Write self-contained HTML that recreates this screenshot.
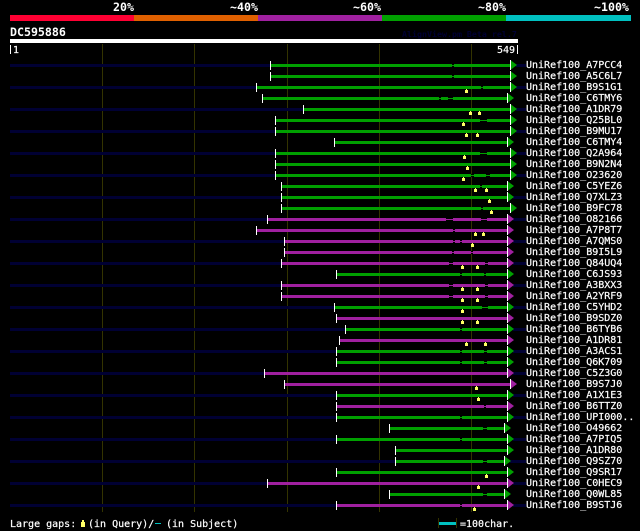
<!DOCTYPE html>
<html><head><meta charset="utf-8"><style>
html,body{margin:0;padding:0;background:#000;width:640px;height:531px;overflow:hidden}
svg{display:block}
text{font-family:"DejaVu Sans Mono","Liberation Mono",monospace;font-size:10px;fill:#fff;stroke:#fff;stroke-width:.2px;white-space:pre}
.h text{font-size:11.6px;font-weight:bold;stroke:none}
.n{fill:#000033}.g{fill:#00a000}.m{fill:#a020a0}
.k{stroke:#000;stroke-width:1;fill:none}
</style></head><body>
<svg width="640" height="531" viewBox="0 0 640 531" xmlns="http://www.w3.org/2000/svg">
<defs>
<rect id="s" x="0" y="-3" width="1" height="9" fill="#fff"/>
<g id="eg"><rect x="0" y="-4" width="1" height="10" fill="#fff"/><polygon points="1,-3.5 7,1 1,5.5" fill="#00a000"/></g>
<g id="em"><rect x="0" y="-4" width="1" height="10" fill="#fff"/><polygon points="1,-3.5 7,1 1,5.5" fill="#a020a0"/></g>
<g id="y" fill="#ffff66"><rect x="0" y="3" width="1" height="1"/><rect x="-1" y="4" width="3" height="3"/></g>
</defs>

<rect x="10" y="15" width="124" height="6" fill="#ff0033"/>
<rect x="134" y="15" width="124" height="6" fill="#e06000"/>
<rect x="258" y="15" width="124" height="6" fill="#a020a0"/>
<rect x="382" y="15" width="124" height="6" fill="#00a000"/>
<rect x="506" y="15" width="125" height="6" fill="#00c0c0"/>
<g class="h">
<text x="113" y="11">20%</text>
<text x="230" y="11">~40%</text>
<text x="353" y="11">~60%</text>
<text x="478" y="11">~80%</text>
<text x="594" y="11">~100%</text>
<text x="10" y="36">DC595886</text>
</g>
<text x="402" y="37" style="fill:#000033;stroke:none;font-weight:bold;font-size:8.3px">AlignView.pm Beta rel.7</text>
<rect x="10" y="39" width="508" height="4" fill="#fff"/>
<rect x="10" y="45" width="1" height="9" fill="#fff"/>
<text x="13" y="53">1</text>
<text x="497" y="53">549</text>
<rect x="517" y="45" width="1" height="9" fill="#fff"/>

<g fill="#333300">
<rect x="102" y="44" width="1" height="468"/>
<rect x="194" y="44" width="1" height="468"/>
<rect x="287" y="44" width="1" height="468"/>
<rect x="379" y="44" width="1" height="468"/>
<rect x="471" y="44" width="1" height="468"/>
</g>

<g transform="translate(0,64)"><path class="n" d="M10 0H270v3H10zM516 0H526v3H516z"/><use href="#s" x="270"/><path class="g" d="M271 0H510v3H271z"/><path class="k" d="M452 .5h2M452 2.5h2"/><use href="#eg" x="510"/></g>
<g transform="translate(0,75)"><use href="#s" x="270"/><path class="g" d="M271 0H510v3H271z"/><path class="k" d="M452 .5h2M452 2.5h2"/><use href="#eg" x="510"/></g>
<g transform="translate(0,86)"><path class="n" d="M10 0H256v3H10zM516 0H526v3H516z"/><use href="#s" x="256"/><path class="g" d="M257 0H510v3H257z"/><path class="k" d="M481 .5h2M481 2.5h2"/><use href="#eg" x="510"/><use href="#y" x="466"/></g>
<g transform="translate(0,97)"><use href="#s" x="262"/><path class="g" d="M263 0H507v3H263z"/><path class="k" d="M439 .5h2M439 2.5h2M448 .5h5M448 2.5h5"/><use href="#eg" x="507"/></g>
<g transform="translate(0,108)"><path class="n" d="M10 0H303v3H10zM516 0H526v3H516z"/><use href="#s" x="303"/><path class="g" d="M304 0H510v3H304z"/><use href="#eg" x="510"/><use href="#y" x="470"/><use href="#y" x="479"/></g>
<g transform="translate(0,119)"><use href="#s" x="275"/><path class="g" d="M276 0H510v3H276z"/><path class="k" d="M480 .5h7M480 2.5h7"/><use href="#eg" x="510"/><use href="#y" x="463"/></g>
<g transform="translate(0,130)"><path class="n" d="M10 0H275v3H10zM516 0H526v3H516z"/><use href="#s" x="275"/><path class="g" d="M276 0H510v3H276z"/><use href="#eg" x="510"/><use href="#y" x="466"/><use href="#y" x="477"/></g>
<g transform="translate(0,141)"><use href="#s" x="334"/><path class="g" d="M335 0H507v3H335z"/><use href="#eg" x="507"/></g>
<g transform="translate(0,152)"><path class="n" d="M10 0H275v3H10zM516 0H526v3H516z"/><use href="#s" x="275"/><path class="g" d="M276 0H510v3H276z"/><path class="k" d="M480 .5h7M480 2.5h7"/><use href="#eg" x="510"/><use href="#y" x="464"/></g>
<g transform="translate(0,163)"><use href="#s" x="275"/><path class="g" d="M276 0H510v3H276z"/><use href="#eg" x="510"/><use href="#y" x="467"/></g>
<g transform="translate(0,174)"><path class="n" d="M10 0H275v3H10zM516 0H526v3H516z"/><use href="#s" x="275"/><path class="g" d="M276 0H510v3H276z"/><path class="k" d="M471 .5h3M471 2.5h3M486 .5h4M486 2.5h4"/><use href="#eg" x="510"/><use href="#y" x="463"/></g>
<g transform="translate(0,185)"><use href="#s" x="281"/><path class="g" d="M282 0H507v3H282z"/><path class="k" d="M480 .5h2M480 2.5h2"/><use href="#eg" x="507"/><use href="#y" x="475"/><use href="#y" x="486"/></g>
<g transform="translate(0,196)"><path class="n" d="M10 0H281v3H10zM513 0H526v3H513z"/><use href="#s" x="281"/><path class="g" d="M282 0H507v3H282z"/><use href="#eg" x="507"/><use href="#y" x="489"/></g>
<g transform="translate(0,207)"><use href="#s" x="281"/><path class="g" d="M282 0H510v3H282z"/><path class="k" d="M481 .5h2M481 2.5h2"/><use href="#eg" x="510"/><use href="#y" x="491"/></g>
<g transform="translate(0,218)"><path class="n" d="M10 0H267v3H10zM513 0H526v3H513z"/><use href="#s" x="267"/><path class="m" d="M268 0H507v3H268z"/><path class="k" d="M446 .5h7M446 2.5h7M481 .5h6M481 2.5h6"/><use href="#em" x="507"/></g>
<g transform="translate(0,229)"><use href="#s" x="256"/><path class="m" d="M257 0H507v3H257z"/><path class="k" d="M453 .5h2M453 2.5h2"/><use href="#em" x="507"/><use href="#y" x="475"/><use href="#y" x="483"/></g>
<g transform="translate(0,240)"><path class="n" d="M10 0H284v3H10zM513 0H526v3H513z"/><use href="#s" x="284"/><path class="m" d="M285 0H507v3H285z"/><path class="k" d="M453 .5h2M453 2.5h2M460 .5h2M460 2.5h2"/><use href="#em" x="507"/><use href="#y" x="472"/></g>
<g transform="translate(0,251)"><use href="#s" x="284"/><path class="m" d="M285 0H507v3H285z"/><path class="k" d="M452 .5h2M452 2.5h2M471 .5h2M471 2.5h2"/><use href="#em" x="507"/></g>
<g transform="translate(0,262)"><path class="n" d="M10 0H281v3H10zM513 0H526v3H513z"/><use href="#s" x="281"/><path class="m" d="M282 0H507v3H282z"/><path class="k" d="M449 .5h4M449 2.5h4M485 .5h3M485 2.5h3"/><use href="#em" x="507"/><use href="#y" x="462"/><use href="#y" x="477"/></g>
<g transform="translate(0,273)"><use href="#s" x="336"/><path class="g" d="M337 0H507v3H337z"/><path class="k" d="M460 .5h2M460 2.5h2M484 .5h2M484 2.5h2"/><use href="#eg" x="507"/></g>
<g transform="translate(0,284)"><path class="n" d="M10 0H281v3H10zM513 0H526v3H513z"/><use href="#s" x="281"/><path class="m" d="M282 0H507v3H282z"/><path class="k" d="M449 .5h4M449 2.5h4M485 .5h3M485 2.5h3"/><use href="#em" x="507"/><use href="#y" x="462"/><use href="#y" x="477"/></g>
<g transform="translate(0,295)"><use href="#s" x="281"/><path class="m" d="M282 0H507v3H282z"/><path class="k" d="M449 .5h4M449 2.5h4M485 .5h3M485 2.5h3"/><use href="#em" x="507"/><use href="#y" x="462"/><use href="#y" x="477"/></g>
<g transform="translate(0,306)"><path class="n" d="M10 0H334v3H10zM513 0H526v3H513z"/><use href="#s" x="334"/><path class="g" d="M335 0H507v3H335z"/><path class="k" d="M482 .5h6M482 2.5h6"/><use href="#eg" x="507"/><use href="#y" x="462"/></g>
<g transform="translate(0,317)"><use href="#s" x="336"/><path class="m" d="M337 0H507v3H337z"/><use href="#em" x="507"/><use href="#y" x="462"/><use href="#y" x="477"/></g>
<g transform="translate(0,328)"><path class="n" d="M10 0H345v3H10zM513 0H526v3H513z"/><use href="#s" x="345"/><path class="g" d="M346 0H507v3H346z"/><path class="k" d="M460 .5h2M460 2.5h2"/><use href="#eg" x="507"/></g>
<g transform="translate(0,339)"><use href="#s" x="339"/><path class="m" d="M340 0H507v3H340z"/><use href="#em" x="507"/><use href="#y" x="466"/><use href="#y" x="485"/></g>
<g transform="translate(0,350)"><path class="n" d="M10 0H336v3H10zM513 0H526v3H513z"/><use href="#s" x="336"/><path class="g" d="M337 0H507v3H337z"/><path class="k" d="M460 .5h2M460 2.5h2M484 .5h3M484 2.5h3"/><use href="#eg" x="507"/></g>
<g transform="translate(0,361)"><use href="#s" x="336"/><path class="g" d="M337 0H507v3H337z"/><path class="k" d="M460 .5h2M460 2.5h2M484 .5h3M484 2.5h3"/><use href="#eg" x="507"/></g>
<g transform="translate(0,372)"><path class="n" d="M10 0H264v3H10zM513 0H526v3H513z"/><use href="#s" x="264"/><path class="m" d="M265 0H507v3H265z"/><use href="#em" x="507"/></g>
<g transform="translate(0,383)"><use href="#s" x="284"/><path class="m" d="M285 0H510v3H285z"/><use href="#em" x="510"/><use href="#y" x="476"/></g>
<g transform="translate(0,394)"><path class="n" d="M10 0H336v3H10zM513 0H526v3H513z"/><use href="#s" x="336"/><path class="g" d="M337 0H507v3H337z"/><use href="#eg" x="507"/><use href="#y" x="478"/></g>
<g transform="translate(0,405)"><use href="#s" x="336"/><path class="m" d="M337 0H507v3H337z"/><path class="k" d="M484 .5h2M484 2.5h2"/><use href="#em" x="507"/></g>
<g transform="translate(0,416)"><path class="n" d="M10 0H336v3H10zM513 0H526v3H513z"/><use href="#s" x="336"/><path class="g" d="M337 0H507v3H337z"/><path class="k" d="M460 .5h2M460 2.5h2"/><use href="#eg" x="507"/></g>
<g transform="translate(0,427)"><use href="#s" x="389"/><path class="g" d="M390 0H504v3H390z"/><path class="k" d="M483 .5h4M483 2.5h4"/><use href="#eg" x="504"/></g>
<g transform="translate(0,438)"><path class="n" d="M10 0H336v3H10zM513 0H526v3H513z"/><use href="#s" x="336"/><path class="g" d="M337 0H507v3H337z"/><path class="k" d="M460 .5h2M460 2.5h2"/><use href="#eg" x="507"/></g>
<g transform="translate(0,449)"><use href="#s" x="395"/><path class="g" d="M396 0H507v3H396z"/><use href="#eg" x="507"/></g>
<g transform="translate(0,460)"><path class="n" d="M10 0H395v3H10zM510 0H526v3H510z"/><use href="#s" x="395"/><path class="g" d="M396 0H504v3H396z"/><path class="k" d="M483 .5h4M483 2.5h4"/><use href="#eg" x="504"/></g>
<g transform="translate(0,471)"><use href="#s" x="336"/><path class="g" d="M337 0H507v3H337z"/><use href="#eg" x="507"/><use href="#y" x="486"/></g>
<g transform="translate(0,482)"><path class="n" d="M10 0H267v3H10zM513 0H526v3H513z"/><use href="#s" x="267"/><path class="m" d="M268 0H507v3H268z"/><use href="#em" x="507"/><use href="#y" x="478"/></g>
<g transform="translate(0,493)"><use href="#s" x="389"/><path class="g" d="M390 0H504v3H390z"/><path class="k" d="M483 .5h4M483 2.5h4"/><use href="#eg" x="504"/></g>
<g transform="translate(0,504)"><path class="n" d="M10 0H336v3H10zM513 0H526v3H513z"/><use href="#s" x="336"/><path class="m" d="M337 0H507v3H337z"/><path class="k" d="M460 .5h2M460 2.5h2"/><use href="#em" x="507"/><use href="#y" x="474"/></g>

<g>
<text x="526" y="68">UniRef100_A7PCC4</text>
<text x="526" y="79">UniRef100_A5C6L7</text>
<text x="526" y="90">UniRef100_B9S1G1</text>
<text x="526" y="101">UniRef100_C6TMY6</text>
<text x="526" y="112">UniRef100_A1DR79</text>
<text x="526" y="123">UniRef100_Q25BL0</text>
<text x="526" y="134">UniRef100_B9MU17</text>
<text x="526" y="145">UniRef100_C6TMY4</text>
<text x="526" y="156">UniRef100_Q2A964</text>
<text x="526" y="167">UniRef100_B9N2N4</text>
<text x="526" y="178">UniRef100_O23620</text>
<text x="526" y="189">UniRef100_C5YEZ6</text>
<text x="526" y="200">UniRef100_Q7XLZ3</text>
<text x="526" y="211">UniRef100_B9FC78</text>
<text x="526" y="222">UniRef100_O82166</text>
<text x="526" y="233">UniRef100_A7P8T7</text>
<text x="526" y="244">UniRef100_A7QMS0</text>
<text x="526" y="255">UniRef100_B9I5L9</text>
<text x="526" y="266">UniRef100_Q84UQ4</text>
<text x="526" y="277">UniRef100_C6JS93</text>
<text x="526" y="288">UniRef100_A3BXX3</text>
<text x="526" y="299">UniRef100_A2YRF9</text>
<text x="526" y="310">UniRef100_C5YHD2</text>
<text x="526" y="321">UniRef100_B9SDZ0</text>
<text x="526" y="332">UniRef100_B6TYB6</text>
<text x="526" y="343">UniRef100_A1DR81</text>
<text x="526" y="354">UniRef100_A3ACS1</text>
<text x="526" y="365">UniRef100_Q6K709</text>
<text x="526" y="376">UniRef100_C5Z3G0</text>
<text x="526" y="387">UniRef100_B9S7J0</text>
<text x="526" y="398">UniRef100_A1X1E3</text>
<text x="526" y="409">UniRef100_B6TTZ0</text>
<text x="526" y="420">UniRef100_UPI000..</text>
<text x="526" y="431">UniRef100_O49662</text>
<text x="526" y="442">UniRef100_A7PIQ5</text>
<text x="526" y="453">UniRef100_A1DR80</text>
<text x="526" y="464">UniRef100_Q9SZ70</text>
<text x="526" y="475">UniRef100_Q9SR17</text>
<text x="526" y="486">UniRef100_C0HEC9</text>
<text x="526" y="497">UniRef100_Q0WL85</text>
<text x="526" y="508">UniRef100_B9STJ6</text>
</g>

<text x="10" y="527">Large gaps:</text>
<g fill="#ffff66"><rect x="82" y="520" width="2" height="2"/><rect x="81" y="522" width="4" height="5"/></g>
<text x="88" y="527">(in Query)/</text>
<rect x="155" y="523" width="6" height="1" fill="#00c0c0"/>
<text x="166" y="527">(in Subject)</text>
<rect x="438" y="518" width="1" height="10" fill="#333300"/>
<rect x="456" y="518" width="1" height="10" fill="#333300"/>
<rect x="439" y="522" width="17" height="3" fill="#00c0c0"/>
<text x="460" y="527">=100char.</text>
</svg>
</body></html>
